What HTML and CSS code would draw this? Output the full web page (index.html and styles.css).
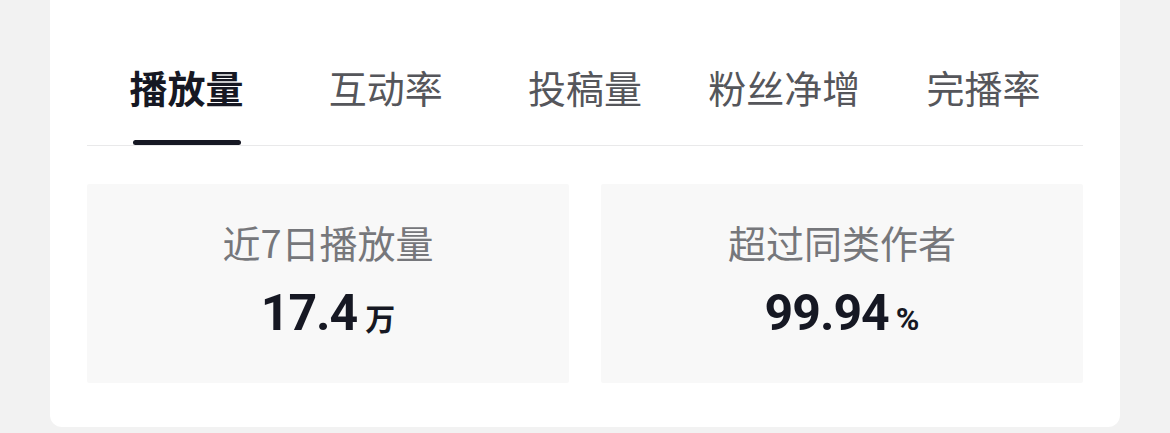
FILE: index.html
```html
<!DOCTYPE html>
<html lang="zh-CN">
<head>
<meta charset="utf-8">
<link rel="stylesheet" href="styles.css">
</head>
<body>
<div class="card">
  <div class="tabs">
    <div class="tab active"><span class="tab-text">播放量</span><span class="indicator"></span></div>
    <div class="tab"><span class="tab-text">互动率</span><span class="indicator"></span></div>
    <div class="tab"><span class="tab-text">投稿量</span><span class="indicator"></span></div>
    <div class="tab"><span class="tab-text">粉丝净增</span><span class="indicator"></span></div>
    <div class="tab"><span class="tab-text">完播率</span><span class="indicator"></span></div>
  </div>
  <div class="stats">
    <div class="stat">
      <div class="stat-label">近7日播放量</div>
      <div class="stat-value"><span class="num">17.4</span><span class="unit">万</span></div>
    </div>
    <div class="stat">
      <div class="stat-label">超过同类作者</div>
      <div class="stat-value"><span class="num">99.94</span><span class="unit pct">%</span></div>
    </div>
  </div>
</div>
</body>
</html>
```
FILE: styles.css
```css
html, body {
  margin: 0;
  padding: 0;
}
body {
  background: #f2f2f2;
  width: 1170px;
  height: 433px;
  overflow: hidden;
  font-family: "Noto Sans CJK SC", "Noto Sans", sans-serif;
}
.card {
  margin-left: 50px;
  width: 1070px;
  box-sizing: border-box;
  background: #ffffff;
  border-radius: 0 0 12px 12px;
  padding: 0 37px 44px;
}
.tabs {
  display: grid;
  grid-template-columns: repeat(5, 1fr);
  border-bottom: 1px solid #e9e9ea;
}
.tab {
  display: flex;
  flex-direction: column;
  align-items: center;
  padding-top: 61px;
}
.tab-text {
  font-size: 38px;
  line-height: 51px;
  color: #55565b;
  white-space: nowrap;
}
.indicator {
  margin-top: 28px;
  width: 108px;
  height: 5px;
  border-radius: 3px;
  background: transparent;
}
.tab.active .tab-text {
  color: #161823;
  font-weight: 700;
}
.tab.active .indicator {
  background: #161823;
}
.stats {
  margin-top: 38px;
  display: grid;
  grid-template-columns: 1fr 1fr;
  gap: 32px;
}
.stat {
  height: 199px;
  background: #f8f8f8;
  border-radius: 2px;
  display: flex;
  flex-direction: column;
  align-items: center;
  box-sizing: border-box;
  padding-top: 32px;
}
.stat-label {
  font-size: 38px;
  line-height: 52px;
  color: #76777b;
}
.stat-value {
  margin-top: 15px;
  line-height: 60px;
  color: #161823;
  white-space: nowrap;
}
.num {
  font-family: Roboto, "Liberation Sans", sans-serif;
  font-weight: 700;
  font-size: 50px;
  letter-spacing: -1px;
}
.unit {
  font-weight: 700;
  font-size: 30px;
  margin-left: 8px;
}
.unit.pct {
  font-family: Roboto, "Liberation Sans", sans-serif;
  font-size: 32px;
  margin-left: 7px;
}
```
